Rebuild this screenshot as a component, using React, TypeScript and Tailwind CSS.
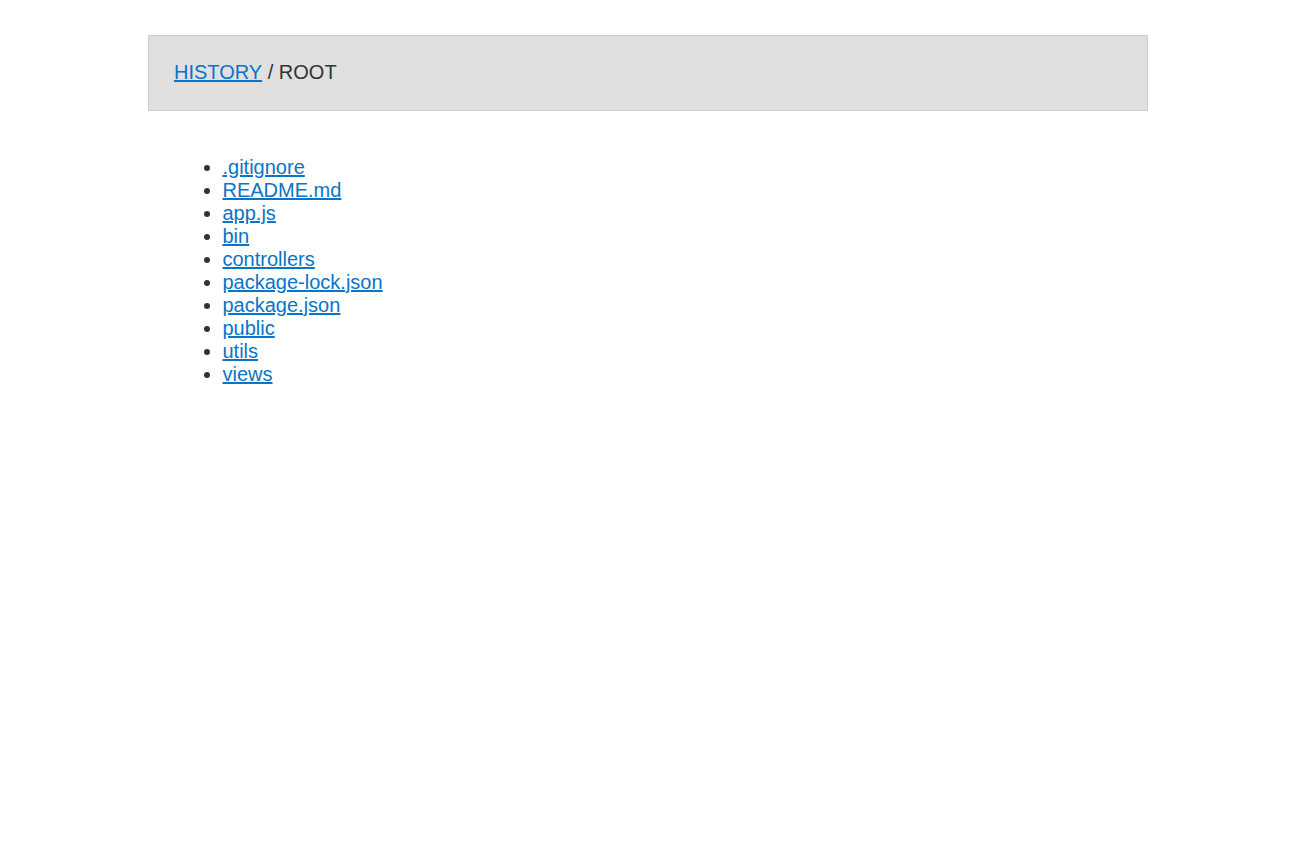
export default function App() {
  const files = [
    ".gitignore",
    "README.md",
    "app.js",
    "bin",
    "controllers",
    "package-lock.json",
    "package.json",
    "public",
    "utils",
    "views",
  ];

  return (
    <div className="min-h-screen bg-white font-['Liberation_Sans',Arial,sans-serif] text-[20px] leading-[23px] text-[#333]">
      <div className="mx-auto w-[1000px] pt-[35px]">
        {/* breadcrumb bar */}
        <div className="flex h-[76px] items-center border border-[#cccccc] bg-[#e0e0e0] pb-[2px] pl-[25.5px] pr-[25px]">
          <a href="#" className="text-[#0a74c9] underline">
            HISTORY
          </a>
          <span className="whitespace-pre"> / ROOT</span>
        </div>

        <ul className="ml-[35px] mt-[45px] list-disc pl-[40px]">
          {files.map((f) => (
            <li key={f}>
              <a href="#" className="text-[#0a74c9] underline">
                {f}
              </a>
            </li>
          ))}
        </ul>
      </div>
    </div>
  );
}
